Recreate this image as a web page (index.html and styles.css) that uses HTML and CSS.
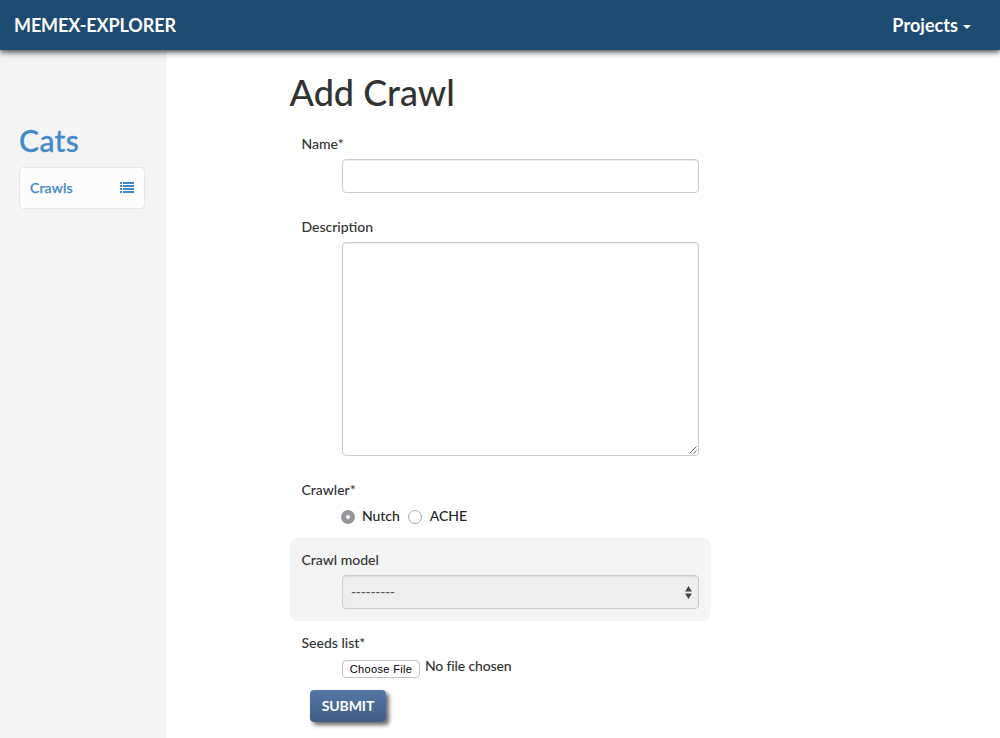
FILE: index.html
```html
<!DOCTYPE html>
<html lang="en">
<head>
<meta charset="utf-8">
<title>Memex-Explorer</title>
<link rel="stylesheet" href="styles.css">
</head>
<body>
<header class="navbar">
  <a class="brand">MEMEX-EXPLORER</a>
  <a class="projects"><span class="projects-text">Projects</span><span class="caret"></span></a>
</header>
<div class="layout">
  <aside class="sidebar">
    <h2 class="project-name"><span>Cats</span></h2>
    <a class="side-link"><span class="side-text">Crawls</span>
      <svg class="list-icon" width="14" height="11" viewBox="0 0 14 11" fill="#428bca" shape-rendering="crispEdges"><path d="M0 0h2v2H0zM3 0h11v2H3zM0 3h2v2H0zM3 3h11v2H3zM0 6h2v2H0zM3 6h11v2H3zM0 9h2v2H0zM3 9h11v2H3z"/></svg>
    </a>
  </aside>
  <main class="content">
    <h1 class="title"><span>Add Crawl</span></h1>
    <form class="form">
      <div class="group">
        <label class="label"><span>Name*</span></label>
        <div class="field input"></div>
      </div>
      <div class="group">
        <label class="label"><span>Description</span></label>
        <div class="field textarea">
          <svg width="9" height="9" viewBox="0 0 9 9" stroke="#555" stroke-width=".9" fill="none"><path d="M.5 7.5L7.5 .5M4.5 7.5L7.5 4.5"/></svg>
        </div>
      </div>
      <div class="group">
        <label class="label"><span>Crawler*</span></label>
        <div class="radios">
          <span class="radio checked"></span><span class="radio-text nutch">Nutch</span>
          <span class="radio"></span><span class="radio-text ache">ACHE</span>
        </div>
      </div>
      <div class="group disabled">
        <label class="label"><span>Crawl model</span></label>
        <div class="field select"><span class="select-text">---------</span>
          <svg width="7" height="13" viewBox="0 0 7 13" fill="#444"><path d="M3.5 0L6.9 5.4H.1zM3.5 13L6.9 7.6H.1z"/></svg>
        </div>
      </div>
      <div class="group seeds">
        <label class="label"><span>Seeds list*</span></label>
        <div class="file"><span class="file-button"><span>Choose File</span></span><span class="file-text">No file chosen</span></div>
      </div>
      <button class="submit" type="button"><span>SUBMIT</span></button>
    </form>
  </main>
</div>
</body>
</html>
```
FILE: styles.css
```css
* { box-sizing: border-box; }
body {
  margin: 0;
  height: 738px;
  overflow: hidden;
  background: #fff;
  color: #333;
  font: 500 14px/20px Lato, sans-serif;
}
.navbar {
  position: relative;
  display: flex;
  justify-content: space-between;
  align-items: center;
  height: 50px;
  padding: 0 29px 0 14px;
  background: #1e4b71;
  box-shadow: 0 2px 6px rgba(0, 0, 0, .75);
  color: #fff;
  font-size: 18px;
  font-weight: 700;
}
.brand { letter-spacing: -.12px; }
.projects { display: flex; align-items: center; gap: 5px; }
.projects-text { letter-spacing: .05px; }
.caret {
  margin-top: 3px;
  border: 4px solid transparent;
  border-top-color: #fff;
  border-bottom: 0;
}
.layout { display: flex; height: 688px; }
.sidebar {
  width: 166px;
  padding: 74px 20px 0 19px;
  background: #f4f4f4;
  border-right: 1px solid #eee;
}
.project-name {
  margin: 0 0 10px;
  color: #428bca;
  font-size: 30px;
  font-weight: 500;
  line-height: 33px;
  letter-spacing: .4px;
  -webkit-text-stroke: .3px #428bca;
}
.side-link {
  display: flex;
  justify-content: space-between;
  align-items: center;
  height: 42px;
  padding: 0 10px;
  background: #fcfcfc;
  border: 1px solid #e7e7e7;
  border-radius: 4px;
  color: #428bca;
  font-weight: 500;
}
.side-text { letter-spacing: .15px; -webkit-text-stroke: .25px #428bca; }
.list-icon { margin-bottom: 1px; }
.content { width: 421px; margin-left: 124px; padding-top: 22px; }
.title {
  margin: 0 0 10px -.5px;
  font-size: 36px;
  font-weight: 500;
  line-height: 40px;
}
.group { padding: 12px; }
.label { display: block; margin: 0 0 5px -.5px; }
.field {
  width: 357px;
  height: 34px;
  margin-left: 40px;
  border: 1px solid #ccc;
  border-radius: 4px;
  box-shadow: inset 0 1px 1px rgba(0, 0, 0, .075);
}
.textarea { display: flex; justify-content: flex-end; align-items: flex-end; height: 214px; }
.radios { display: flex; align-items: center; height: 21px; padding-left: 39px; }
.radio {
  width: 14px;
  height: 14px;
  margin-top: 3px;
  border: 1px solid #aaa;
  border-radius: 50%;
}
.checked { border: 5px solid #98979c; }
.radio-text { color: #222; }
.nutch { margin: 0 8px 0 7px; letter-spacing: -.05px; }
.ache { margin-left: 8px; }
.disabled { background: #f4f4f4; border-radius: 8px; }
.select {
  display: flex;
  justify-content: space-between;
  align-items: center;
  padding: 0 6px 0 8px;
  background: #eee;
  color: #555;
}
.select-text { letter-spacing: -.35px; }
.seeds { padding-bottom: 0; }
.file { display: flex; gap: 5px; height: 32px; padding-left: 40px; }
.file-button {
  width: 78px;
  height: 18px;
  margin-top: 2px;
  border: 1px solid #c4c4c4;
  border-radius: 4px;
  color: #000;
  font: 11px/16px "Liberation Sans", Arial, sans-serif;
  letter-spacing: .35px;
  text-align: center;
}
.file-text { margin-top: -2px; letter-spacing: -.15px; }
.submit {
  display: block;
  width: 76px;
  height: 32px;
  margin: 0 0 0 20px;
  padding: 0;
  background: linear-gradient(#5478a8, #3f5c82);
  border: 0;
  border-radius: 4px;
  box-shadow: 3px 3px 4px rgba(0, 0, 0, .6);
  color: #fff;
  font: 700 14px/32px Lato, sans-serif;
  letter-spacing: -.1px;
}
```
